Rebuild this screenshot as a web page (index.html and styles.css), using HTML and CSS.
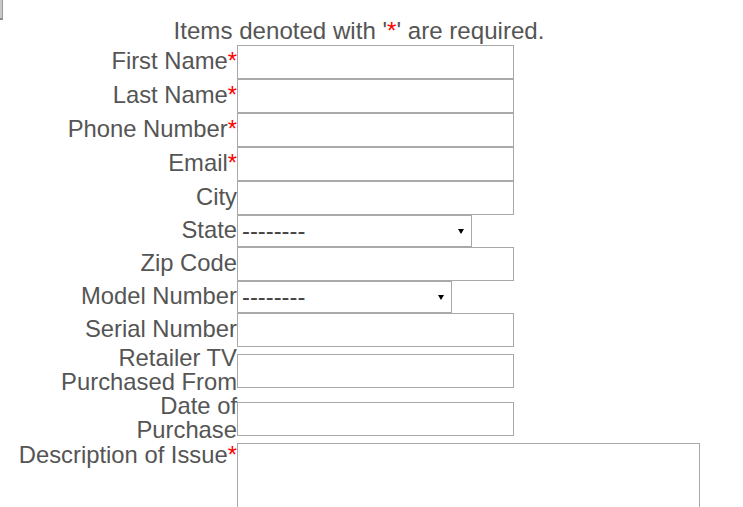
FILE: index.html
```html
<!DOCTYPE html>
<html>
<head>
<meta charset="utf-8">
<title>Service Request</title>
<link rel="stylesheet" href="styles.css">
</head>
<body>
<div class="corner-bar"></div>
<form class="form">
  <p class="note">Items denoted with '<span class="req">*</span>' are required.</p>

  <label class="lbl" for="first">First Name<span class="req">*</span></label>
  <input class="field" id="first" type="text">

  <label class="lbl" for="last">Last Name<span class="req">*</span></label>
  <input class="field" id="last" type="text">

  <label class="lbl" for="phone">Phone Number<span class="req">*</span></label>
  <input class="field" id="phone" type="text">

  <label class="lbl" for="email">Email<span class="req">*</span></label>
  <input class="field" id="email" type="text">

  <label class="lbl" for="city">City</label>
  <input class="field" id="city" type="text">

  <label class="lbl" for="state">State</label>
  <select class="choice choice-state" id="state"><option>--------</option></select>

  <label class="lbl" for="zip">Zip Code</label>
  <input class="field" id="zip" type="text">

  <label class="lbl" for="model">Model Number</label>
  <select class="choice choice-model" id="model"><option>--------</option></select>

  <label class="lbl" for="serial">Serial Number</label>
  <input class="field" id="serial" type="text">

  <label class="lbl" for="retailer">Retailer TV<br>Purchased From</label>
  <input class="field" id="retailer" type="text">

  <label class="lbl" for="date">Date of<br>Purchase</label>
  <input class="field" id="date" type="text">

  <label class="lbl lbl-top" for="desc">Description of Issue<span class="req">*</span></label>
  <textarea class="area" id="desc"></textarea>
</form>
</body>
</html>
```

FILE: styles.css
```css
html, body {
  margin: 0;
  padding: 0;
  background: #ffffff;
}

body {
  padding-top: 17px;
  font-family: "Liberation Sans", Arial, sans-serif;
  color: #555555;
  overflow: hidden;
}

.corner-bar {
  position: absolute;
  left: 0;
  top: 0;
  width: 2px;
  height: 18px;
  background: #c8c8c8;
  border-right: 1px solid #9a9a9a;
  border-bottom: 2px solid #8a8a8a;
}

.form {
  margin-left: 18px;
  width: 682px;
  display: grid;
  grid-template-columns: 219px 463px;
  align-items: center;
}

.note {
  grid-column: 1 / span 2;
  margin: 0;
  font-size: 24.1px;
  line-height: 28px;
  text-align: center;
}

.lbl {
  font-size: 23.8px;
  line-height: 24px;
  text-align: right;
  white-space: nowrap;
  position: relative;
  top: -1px;
}

.lbl-top {
  align-self: start;
  top: 0;
}

.req {
  color: #ff0000;
}

.field {
  display: block;
  box-sizing: border-box;
  width: 277px;
  height: 34px;
  margin: 0;
  padding: 0 4px;
  border: 1px solid #a9a9a9;
  background: #ffffff;
  font-family: "Liberation Sans", Arial, sans-serif;
  font-size: 20px;
}

.choice {
  display: block;
  box-sizing: border-box;
  height: 32px;
  margin: 0;
  padding: 0 0 0 4px;
  border: 1px solid #a9a9a9;
  border-radius: 0;
  -webkit-appearance: none;
  appearance: none;
  background-color: #ffffff;
  background-image: url("data:image/svg+xml;utf8,<svg xmlns='http://www.w3.org/2000/svg' width='6' height='5'><path d='M0 0H6L3 5Z' fill='black'/></svg>");
  background-repeat: no-repeat;
  background-position: right 7px center;
  color: #444444;
  font-family: "Liberation Sans", Arial, sans-serif;
  font-size: 23.8px;
  line-height: 30px;
}

.choice-state {
  width: 235px;
}

.choice-model {
  width: 215px;
}

.area {
  display: block;
  box-sizing: border-box;
  width: 463px;
  height: 110px;
  margin: 0;
  padding: 2px;
  border: 1px solid #a9a9a9;
  resize: none;
  font-family: "Liberation Sans", Arial, sans-serif;
  font-size: 20px;
}
```
